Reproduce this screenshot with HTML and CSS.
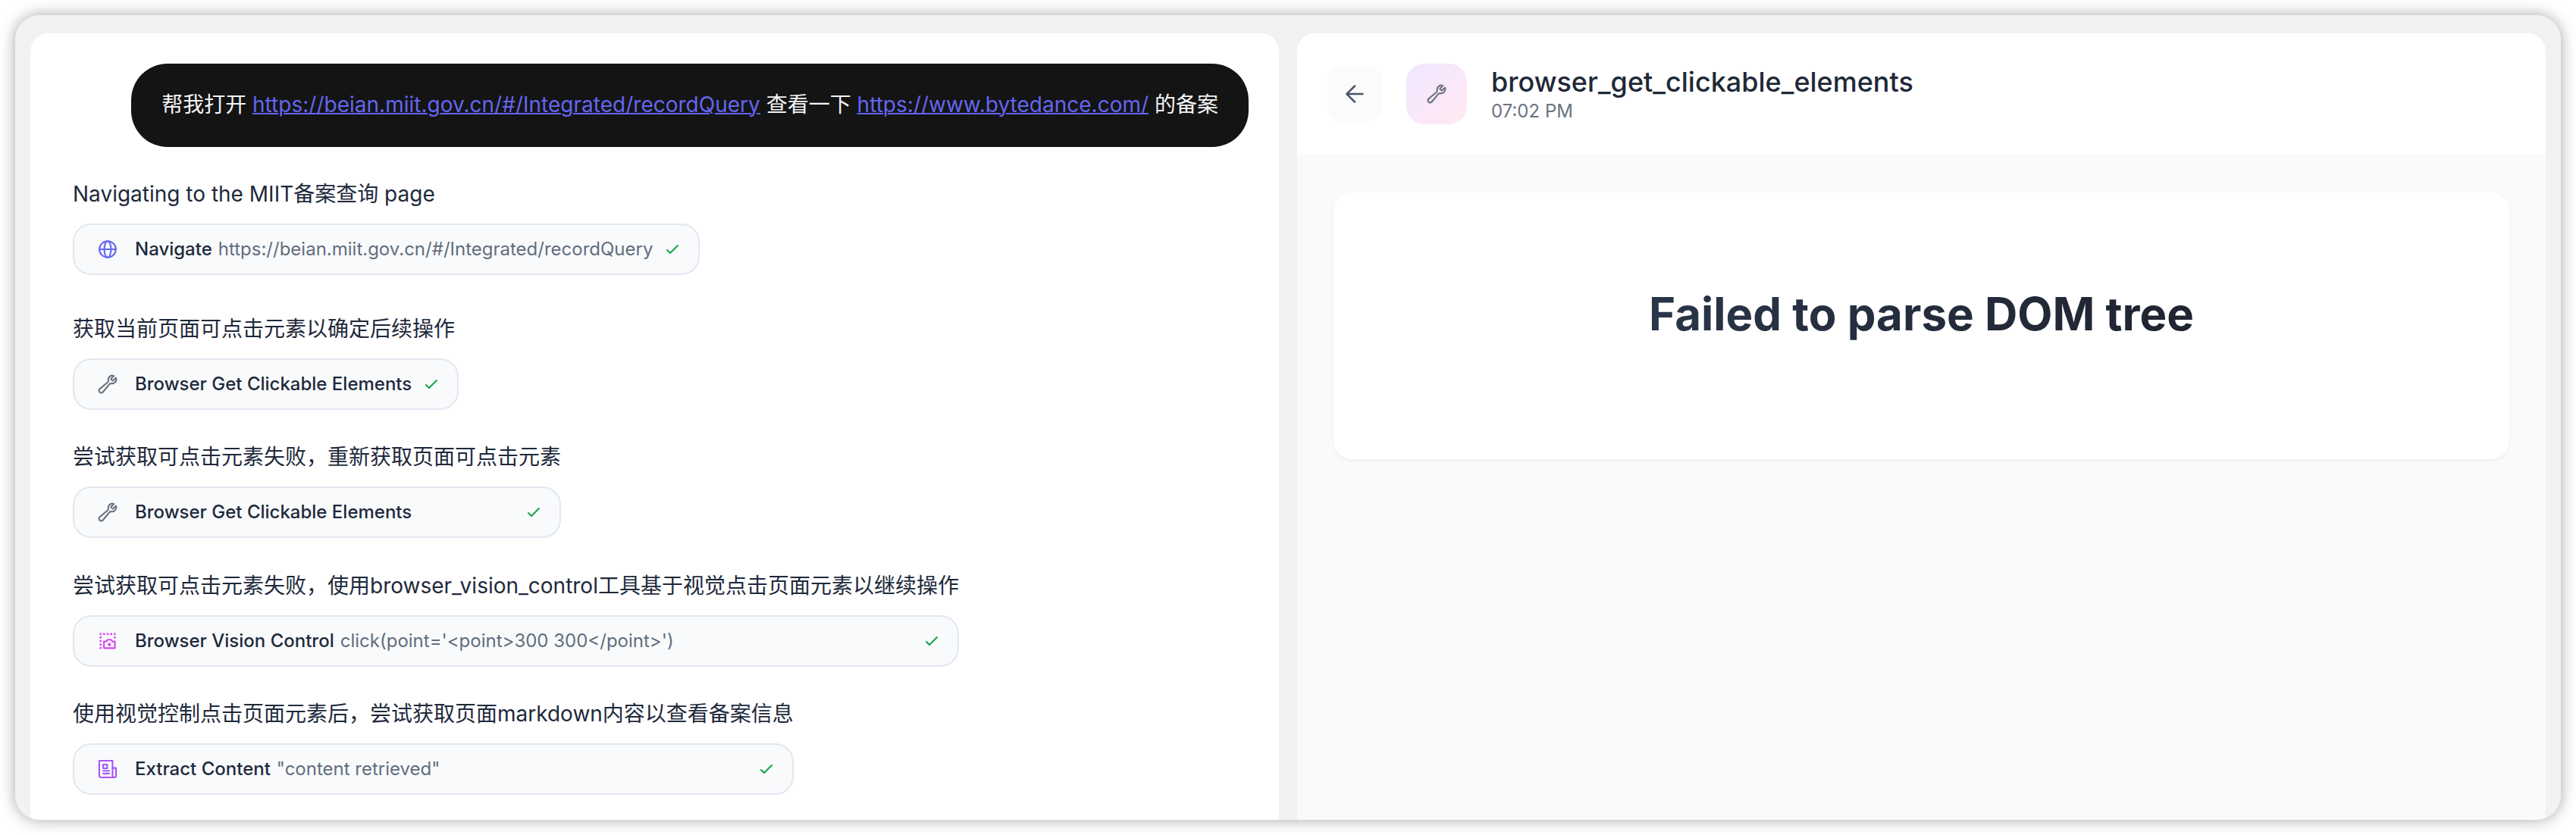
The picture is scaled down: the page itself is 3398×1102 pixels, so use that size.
FILE: index.html
```html
<!DOCTYPE html>
<html lang="zh-CN">
<head>
<meta charset="utf-8">
<title>browser_get_clickable_elements</title>
<link rel="stylesheet" href="styles.css">
</head>
<body>
<svg class="symbols" xmlns="http://www.w3.org/2000/svg">
  <symbol id="globe" viewBox="0 0 24 24"><circle cx="12" cy="12" r="9.250"/><path d="M3 12h18"/><ellipse cx="12" cy="12" rx="3.8" ry="9.250"/></symbol>
  <symbol id="wrench" viewBox="0 0 24 24"><path d="M21.75 6.75a4.5 4.5 0 0 1-4.884 4.484c-1.076-.091-2.264.071-2.95.904l-7.152 8.684a2.548 2.548 0 1 1-3.586-3.586l8.684-7.152c.833-.686.995-1.874.904-2.95a4.5 4.5 0 0 1 6.336-4.486l-3.276 3.276a3.004 3.004 0 0 0 2.25 2.25l3.276-3.276c.256.565.398 1.192.398 1.852Z"/></symbol>
  <symbol id="check" viewBox="0 0 24 24"><path d="M5 13l4 4L19 7"/></symbol>
  <symbol id="arrow" viewBox="0 0 24 24"><path d="M21 12H3M12 3l-9 9 9 9"/></symbol>
  <symbol id="capture" viewBox="0 0 24 24"><path class="solid" d="M2.900 2.900h2.200v2.200H2.900zM6.900 2.900h2.200v2.200H6.900zM10.900 2.900h2.200v2.200h-2.200zM14.900 2.900h2.200v2.200h-2.200zM18.900 2.900h2.200v2.200h-2.200zM2.900 6.900h2.200v2.200H2.900zM18.900 6.900h2.200v2.200h-2.200zM2.900 10.900h2.200v2.200H2.900zM2.900 14.900h2.200v2.200H2.900zM2.900 18.900h2.200v2.200H2.900z"/><path d="M7.800 12.500h2.900l1.300-2h4l1.300 2h2.900V20H7.800z"/><circle class="solid" cx="14" cy="16" r="1.800"/></symbol>
  <symbol id="paper" viewBox="0 0 24 24"><path d="M19.500 21.400H4.500a2 2 0 0 1-2-2V2.600h15v16.800a2 2 0 0 0 4 0v-8.600h-4M19.500 21.400a2 2 0 0 0 2-2M6.900 6.900h4.600v4.300H6.900zM6.900 13.900h6.800M6.900 17h6.800"/></symbol>
</svg>
<div class="window">
  <div class="tab-edge"></div>
  <main class="chat">
    <div class="bubble">帮我打开 <a>https://beian.miit.gov.cn/#/Integrated/recordQuery</a> 查看一下 <a>https://www.bytedance.com/</a> 的备案</div>
    <div class="steps">
      <section class="step first">
        <p>Navigating to the MIIT备案查询 page</p>
        <div class="chip"><svg class="icon blue"><use href="#globe"/></svg><b>Navigate</b><span>https://beian.miit.gov.cn/#/Integrated/recordQuery</span><svg class="done"><use href="#check"/></svg></div>
      </section>
      <section class="step">
        <p>获取当前页面可点击元素以确定后续操作</p>
        <div class="chip"><svg class="icon gray"><use href="#wrench"/></svg><b>Browser Get Clickable Elements</b><svg class="done"><use href="#check"/></svg></div>
      </section>
      <section class="step">
        <p>尝试获取可点击元素失败，重新获取页面可点击元素</p>
        <div class="chip"><svg class="icon gray"><use href="#wrench"/></svg><b>Browser Get Clickable Elements</b><svg class="done"><use href="#check"/></svg></div>
      </section>
      <section class="step">
        <p>尝试获取可点击元素失败，使用browser_vision_control工具基于视觉点击页面元素以继续操作</p>
        <div class="chip"><svg class="icon pink"><use href="#capture"/></svg><b>Browser Vision Control</b><span>click(point='&lt;point&gt;300 300&lt;/point&gt;')</span><svg class="done"><use href="#check"/></svg></div>
      </section>
      <section class="step">
        <p>使用视觉控制点击页面元素后，尝试获取页面markdown内容以查看备案信息</p>
        <div class="chip"><svg class="icon purple"><use href="#paper"/></svg><b>Extract Content</b><span>"content retrieved"</span><svg class="done"><use href="#check"/></svg></div>
      </section>
    </div>
  </main>
  <aside class="detail">
    <header>
      <button class="back"><svg><use href="#arrow"/></svg></button>
      <div class="tool"><svg><use href="#wrench"/></svg></div>
      <div class="title"><h2>browser_get_clickable_elements</h2><time>07:02 PM</time></div>
    </header>
    <div class="content"><div class="card"><h1>Failed to parse DOM tree</h1></div></div>
  </aside>
</div>
</body>
</html>
```
FILE: styles.css
```css
* { box-sizing: border-box; }
body { margin: 0; padding: 20px; height: 1102px; background: #fff; overflow: hidden; font-family: Inter, "Noto Sans CJK SC", sans-serif; color: #1e293b; }
svg { fill: none; stroke: currentColor; stroke-width: 1.8; stroke-linecap: round; stroke-linejoin: round; flex: none; }
.symbols { display: none; }
.solid { fill: currentColor; stroke: none; }
.window { position: relative; height: 1062px; padding: 24px 20px 0; display: flex; gap: 24px; background: #f1f2f4; border-radius: 32px; overflow: hidden; box-shadow: 0 0 20px rgba(0,0,0,.35); }
.tab-edge { position: absolute; top: -20px; left: 1384px; width: 564px; height: 25px; border: 1px solid #eceef0; border-radius: 16px; }
.chat { width: 1647px; background: #fff; border-radius: 24px 24px 0 0; padding: 40px 40px 0 56px; display: flex; flex-direction: column; }
.bubble { flex: none; align-self: flex-end; height: 110px; padding: 0 40px; line-height: 108px; font-size: 28px; white-space: nowrap; color: #f3f4f6; background: #141414; border-radius: 48px; }
.bubble a { color: #6366f1; letter-spacing: .01px; text-decoration: underline; text-decoration-thickness: 2px; }
.steps { flex: none; display: flex; flex-direction: column; align-items: flex-start; padding-top: 39px; }
.step { height: 169.4px; }
.step.first { height: 178px; }
.step p { margin: 0 0 16px; height: 46px; line-height: 46px; font-size: 28px; white-space: nowrap; }
.chip { height: 68px; padding: 0 22px 0 30px; display: flex; align-items: center; white-space: nowrap; font-size: 24px; background: #f8fafc; border: 2px solid #e2e8f0; border-radius: 24px; }
.chip b, .chip span { padding-bottom: 1px; }
.chip b { font-weight: 500; }
.chip span { margin-left: 8px; color: #626d7c; }
.icon { width: 28px; height: 28px; margin-right: 22px; }
.done { box-sizing: content-box; width: 24px; height: 24px; margin-left: auto; padding-left: 14px; color: #16a34a; stroke-width: 2; }
.blue { color: #6366f1; }
.gray { color: #6b7280; }
.pink { color: #d946ef; }
.purple { color: #a855f7; }
.detail { width: 1647px; background: #f8fafc; border-radius: 24px 24px 0 0; overflow: hidden; }
.detail header { height: 160px; padding: 0 40px; display: flex; align-items: center; background: #fff; }
.back { width: 72px; height: 72px; padding: 0; border: 0; border-radius: 16px; background: #fbfbfb; color: #475569; display: grid; place-items: center; }
.back svg { width: 28px; height: 28px; stroke-width: 2.2; }
.tool { width: 80px; height: 80px; margin: 0 32px; border-radius: 24px; background: linear-gradient(135deg, #f0e6ff, #fae8fa 55%, #ffe9f0); color: #6b7280; display: grid; place-items: center; }
.tool svg { width: 28px; height: 28px; }
.title { height: 80px; }
.title h2 { margin: 0; font-size: 36px; line-height: 48px; font-weight: 500; color: #1f2937; }
.title time { display: block; font-size: 24px; line-height: 30px; color: #6b7280; }
.content { padding: 50px 48px; }
.card { height: 352px; padding-top: 112px; background: #fff; border-radius: 24px; box-shadow: 0 2px 4px rgba(0,0,0,.05); text-align: center; }
.card h1 { display: inline-block; margin: 0; font-size: 60px; line-height: 96px; font-weight: 700; color: transparent; background: linear-gradient(90deg, #293548, #1f2430); background-clip: text; -webkit-background-clip: text; }
```
